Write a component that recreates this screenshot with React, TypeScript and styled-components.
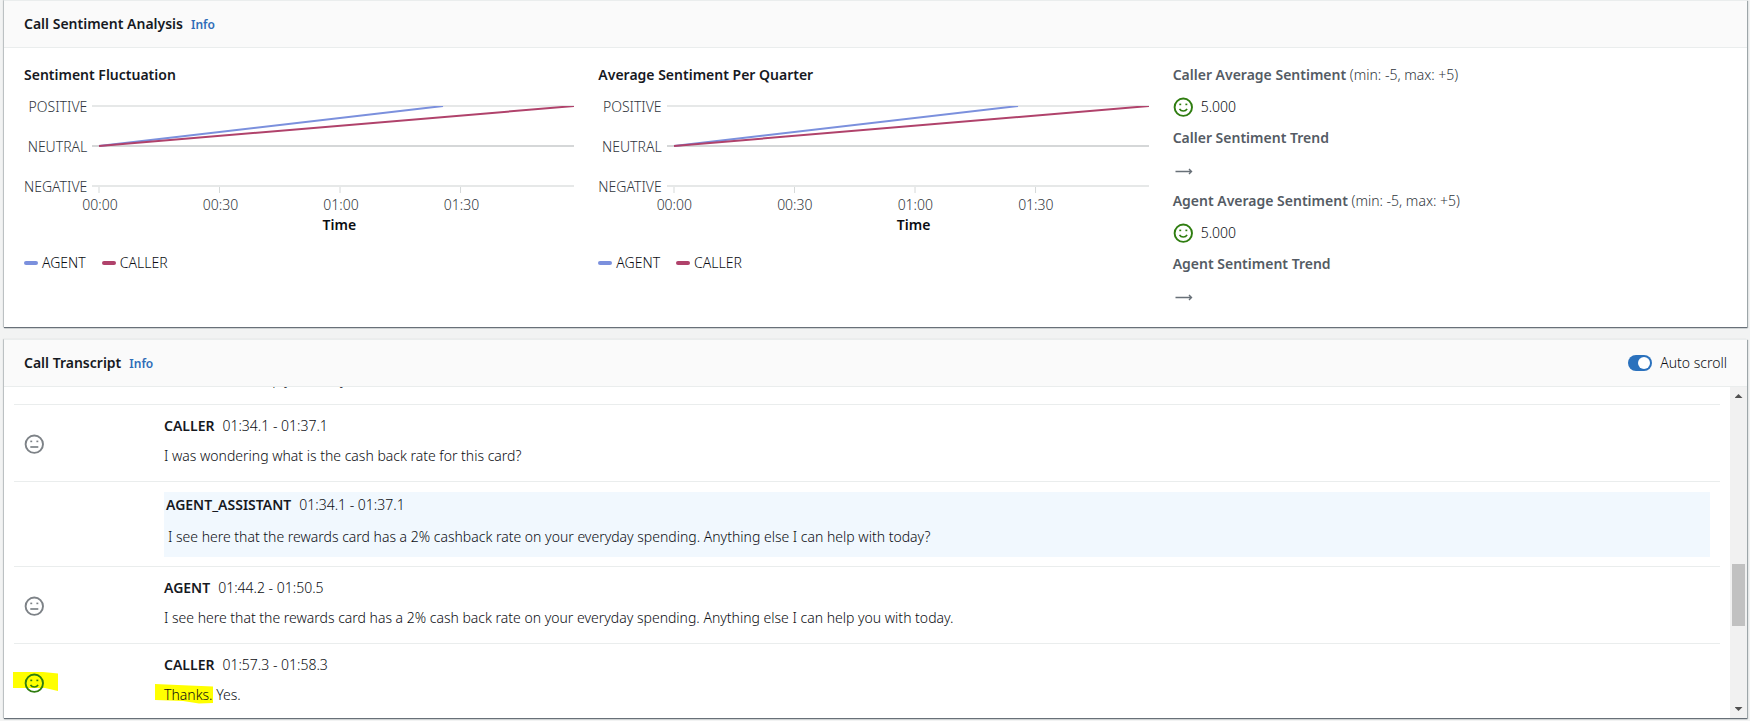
import React, { useId, useLayoutEffect, useRef, useState } from 'react';
import styled, { createGlobalStyle } from 'styled-components';

const GlobalStyle = createGlobalStyle`
  *, *::before, *::after { box-sizing: border-box; }
  body {
    margin: 0;
    background: #f2f3f3;
    color: #0b0d12;
    font: 300 14px/22px "Noto Sans", "Open Sans", sans-serif;
  }
  h2, h3, h4, p, ul, ol, dl, dd, figure { margin: 0; padding: 0; }
`;

const Page = styled.main`
  display: flex;
  flex-direction: column;
  gap: 12px;
  padding: 0 3px 3px 4px;
`;

const Panel = styled.section`
  background: #ffffff;
  border-top: 1px solid #eaeded;
  box-shadow: 0 1px 1px #687078, 1px 1px 1px rgba(0, 28, 36, 0.3), -1px 0 1px rgba(0, 28, 36, 0.15);
`;

const PanelHeader = styled.header`
  display: flex;
  align-items: center;
  justify-content: space-between;
  height: 47px;
  padding: 0 20px;
  background: #fafafa;
  border-bottom: 1px solid #eaeded;
`;

const TitleGroup = styled.div`
  display: flex;
  align-items: baseline;
  gap: 8px;
`;

const PanelTitle = styled.h2`
  color: #16191f;
  font-size: 14px;
  font-weight: 600;
  line-height: 22px;
`;

const InfoLink = styled.a`
  color: #2f6db8;
  font-size: 12px;
  font-weight: 600;
  text-decoration: none;
`;

const Columns = styled.div`
  display: grid;
  grid-template-columns: repeat(3, minmax(0, 1fr));
  gap: 20px;
  padding: 16px 20px 11px;
`;

const ChartTitle = styled.h3`
  color: #16191f;
  font-size: 14px;
  font-weight: 600;
  line-height: 22px;
`;

const Figure = styled.figure`
  padding-right: 4px;
`;

const PlotGrid = styled.div`
  display: grid;
  grid-template-columns: auto minmax(0, 1fr);
  column-gap: 5px;
  margin-top: 10px;
`;

const YLabels = styled.div`
  display: flex;
  flex-direction: column;
  gap: 18px;
  color: #30363d;
  text-align: right;
`;

const Plot = styled.svg`
  display: block;
  width: 100%;
  height: 92px;
  margin-top: 5px;
`;

const XLabels = styled.div`
  grid-column: 2;
  display: grid;
  grid-template-columns: repeat(3, 25%) auto;
  margin: -3px 10px 0 -10px;
  color: #30363d;
`;

const XLabel = styled.span`
  line-height: 20px;
`;

const AxisTitle = styled.div`
  grid-column: 2;
  padding-left: 12px;
  font-weight: 600;
  line-height: 20px;
  text-align: center;
`;

const Legend = styled.ul`
  display: flex;
  gap: 16px;
  margin-top: 17px;
  list-style: none;
`;

const LegendItem = styled.li`
  display: flex;
  align-items: center;
  gap: 4px;
`;

const Swatch = styled.span<{ $color: string }>`
  width: 14px;
  height: 4px;
  border-radius: 2px;
  background: ${(p) => p.$color};
`;

const Stats = styled.dl``;

const StatLabel = styled.dt`
  color: #545b64;
  font-weight: 600;
  line-height: 22px;
`;

const Range = styled.span`
  color: #30363d;
  font-weight: 300;
`;

const StatValue = styled.dd<{ $trend?: boolean }>`
  && {
    display: flex;
    align-items: center;
    gap: 8px;
    height: 22px;
    margin: ${(p) => (p.$trend ? '12px 0 7px' : '10px 0 9px')};
  }
`;

const FaceSvg = styled.svg`
  display: block;
  flex: none;
  width: 20px;
  height: 20px;
  fill: none;
  stroke-width: 2;
`;

const ArrowSvg = styled.svg`
  width: 20px;
  height: 20px;
  fill: none;
  stroke: #687078;
`;

const ToggleLabel = styled.label`
  display: flex;
  align-items: center;
  gap: 8px;
`;

const ToggleInput = styled.input`
  appearance: none;
  display: flex;
  align-items: center;
  width: 24px;
  height: 16px;
  margin: 0;
  padding: 2px;
  border-radius: 8px;
  background: #687078;

  &::before {
    content: '';
    width: 12px;
    height: 12px;
    border-radius: 50%;
    background: #ffffff;
  }
  &:checked {
    justify-content: flex-end;
    background: #2a71bd;
  }
`;

const TranscriptBody = styled.div`
  display: flex;
  height: 331px;
`;

const Viewport = styled.div`
  flex: 1;
  min-width: 0;
  padding: 0 10px;
  overflow-y: scroll;
  scrollbar-width: none;
`;

const Rows = styled.ol`
  position: relative;
  z-index: 0;
  list-style: none;
`;

const Row = styled.li`
  display: grid;
  grid-template-columns: 150px minmax(0, 1fr);
  align-items: center;
  padding: 10px 10px 9px 0;
  border-bottom: 1px solid #eaeded;

  &:first-child { padding-bottom: 8px; }
  &:last-child { border-bottom: 0; padding-bottom: 7px; }
`;

const FaceCell = styled.div`
  position: relative;
  justify-self: start;
  margin-left: 10px;
`;

const Message = styled.div<{ $assistant?: boolean }>`
  display: flex;
  flex-direction: column;
  gap: ${(p) => (p.$assistant ? '10px' : '8px')};
  padding: ${(p) => (p.$assistant ? '2px 2px 9px' : '0 0 5px')};
  background: ${(p) => (p.$assistant ? '#f1f8fe' : 'transparent')};
`;

const Meta = styled.div`
  display: flex;
  gap: 8px;
`;

const Speaker = styled.strong`
  color: #16191f;
  font-weight: 600;
`;

const Quote = styled.p<{ $assistant?: boolean }>`
  padding-left: ${(p) => (p.$assistant ? '2px' : '0')};
`;

const Marked = styled.span`
  position: relative;
`;

const Marker = styled.svg<{ $face?: boolean }>`
  position: absolute;
  z-index: -1;
  left: ${(p) => (p.$face ? '-11px' : '-9px')};
  top: -1px;
  width: ${(p) => (p.$face ? '45px' : '58px')};
  height: ${(p) => (p.$face ? '19px' : '20px')};
  fill: #ffff00;
`;

const ScrollTrack = styled.div`
  display: flex;
  flex-direction: column;
  align-items: center;
  width: 17px;
  background: #f1f1f1;
`;

const ScrollArrow = styled.span<{ $down?: boolean }>`
  width: 8px;
  height: 17px;
  background: #505050;
  clip-path: ${(p) =>
    p.$down ? 'polygon(0 6px, 8px 6px, 4px 10px)' : 'polygon(0 11px, 8px 11px, 4px 7px)'};
`;

const ScrollLane = styled.div`
  display: flex;
  flex-direction: column;
  flex: 1;
`;

const LaneSpace = styled.span<{ $grow: number }>`
  flex: ${(p) => p.$grow};
`;

const Thumb = styled.span`
  width: 13px;
  height: 62px;
  background: #c1c1c1;
`;

const AGENT = '#7b90dd';
const CALLER = '#b0426b';

function Face({ happy }: { happy?: boolean }) {
  const color = happy ? '#2f7d10' : '#7d8287';
  return (
    <FaceSvg viewBox="0 0 20 20" stroke={color} role="img" aria-label={happy ? 'Positive' : 'Neutral'}>
      <circle cx="10.3" cy="10.2" r="8.7" strokeWidth="1.9" />
      <rect x="6.3" y="6.6" width="1.9" height="1.6" fill={color} stroke="none" />
      <rect x="12.4" y="6.6" width="1.9" height="1.6" fill={color} stroke="none" />
      {happy ? (
        <path d="M6.500 11.800c.8 1.500 2.100 2.200 3.800 2.200s3-.7 3.800-2.200" strokeWidth="1.6" />
      ) : (
        <path d="M6.300 13h8" strokeWidth="1.7" />
      )}
    </FaceSvg>
  );
}

function Trend() {
  return (
    <ArrowSvg viewBox="0 0 20 20" role="img" aria-label="Flat">
      <path d="M2.500 9.500h16M16 7l2.500 2.500L16 12" strokeWidth="1.400" />
    </ArrowSvg>
  );
}

function Chart({ title }: { title: string }) {
  return (
    <Figure>
      <ChartTitle>{title}</ChartTitle>
      <PlotGrid>
        <YLabels>
          <span>POSITIVE</span>
          <span>NEUTRAL</span>
          <span>NEGATIVE</span>
        </YLabels>
        <Plot viewBox="0 0 482 92" preserveAspectRatio="none" aria-hidden="true">
          <path d="M0 5H482M0 85H482" stroke="#e6e8e8" strokeWidth="2" />
          <path d="M0 45H482" stroke="#d5d7d8" strokeWidth="2" />
          <path d="M7 86V92M127.500 86V92M248 86V92M368.500 86V92" stroke="#d5d9d9" strokeWidth="1" />
          <svg y="5" width="482" height="50" overflow="hidden">
            <path d="M7 40 351 0" stroke={AGENT} strokeWidth="2" />
            <path d="M7 40 482 0" stroke={CALLER} strokeWidth="2" />
          </svg>
        </Plot>
        <XLabels>
          {['00:00', '00:30', '01:00', '01:30'].map((t) => (
            <XLabel key={t}>{t}</XLabel>
          ))}
        </XLabels>
        <AxisTitle>Time</AxisTitle>
      </PlotGrid>
      <Legend>
        <LegendItem><Swatch $color={AGENT} />AGENT</LegendItem>
        <LegendItem><Swatch $color={CALLER} />CALLER</LegendItem>
      </Legend>
    </Figure>
  );
}

function PartyStats({ name }: { name: string }) {
  return (
    <>
      <StatLabel>{name} Average Sentiment <Range>(min: -5, max: +5)</Range></StatLabel>
      <StatValue><Face happy />5.000</StatValue>
      <StatLabel>{name} Sentiment Trend</StatLabel>
      <StatValue $trend><Trend /></StatValue>
    </>
  );
}

type Segment = {
  speaker: string;
  time: string;
  text: string;
  mood?: 'neutral' | 'happy';
  marked?: string;
};

const segments: Segment[] = [
  { speaker: 'AGENT', time: '01:30.2 - 01:32.4', text: 'Ok, how can I help you today?', mood: 'neutral' },
  { speaker: 'CALLER', time: '01:34.1 - 01:37.1', text: 'I was wondering what is the cash back rate for this card?', mood: 'neutral' },
  { speaker: 'AGENT_ASSISTANT', time: '01:34.1 - 01:37.1', text: 'I see here that the rewards card has a 2% cashback rate on your everyday spending. Anything else I can help with today?' },
  { speaker: 'AGENT', time: '01:44.2 - 01:50.5', text: 'I see here that the rewards card has a 2% cash back rate on your everyday spending. Anything else I can help you with today.', mood: 'neutral' },
  { speaker: 'CALLER', time: '01:57.3 - 01:58.3', marked: 'Thanks.', text: ' Yes.', mood: 'happy' },
];

function TranscriptRow({ segment }: { segment: Segment }) {
  const assistant = !segment.mood;
  return (
    <Row>
      <FaceCell>
        {segment.marked && (
          <Marker $face viewBox="0 0 45 19" aria-hidden="true">
            <path d="M0 0H30L45 1.500V19L32 16H0Z" />
          </Marker>
        )}
        {segment.mood && <Face happy={segment.mood === 'happy'} />}
      </FaceCell>
      <Message $assistant={assistant}>
        <Meta>
          <Speaker>{segment.speaker}</Speaker>
          <span>{segment.time}</span>
        </Meta>
        <Quote $assistant={assistant}>
          {segment.marked && (
            <Marked>
              <Marker viewBox="0 0 58 20" aria-hidden="true">
                <path d="M0 0 34 1.500 58 2.500V19L44 19.500 28 17 0 16Z" />
              </Marker>
              {segment.marked}
            </Marked>
          )}
          {segment.text}
        </Quote>
      </Message>
    </Row>
  );
}

export default function App() {
  const [autoScroll, setAutoScroll] = useState(true);
  const viewport = useRef<HTMLDivElement>(null);
  const toggleId = useId();

  useLayoutEffect(() => {
    const el = viewport.current;
    if (autoScroll && el) el.scrollTop = el.scrollHeight;
  }, [autoScroll]);

  return (
    <>
      <GlobalStyle />
      <Page>
        <Panel>
          <PanelHeader>
            <TitleGroup>
              <PanelTitle>Call Sentiment Analysis</PanelTitle>
              <InfoLink href="#sentiment-info">Info</InfoLink>
            </TitleGroup>
          </PanelHeader>
          <Columns>
            <Chart title="Sentiment Fluctuation" />
            <Chart title="Average Sentiment Per Quarter" />
            <Stats>
              <PartyStats name="Caller" />
              <PartyStats name="Agent" />
            </Stats>
          </Columns>
        </Panel>
        <Panel>
          <PanelHeader>
            <TitleGroup>
              <PanelTitle>Call Transcript</PanelTitle>
              <InfoLink href="#transcript-info">Info</InfoLink>
            </TitleGroup>
            <ToggleLabel htmlFor={toggleId}>
              <ToggleInput
                id={toggleId}
                type="checkbox"
                role="switch"
                checked={autoScroll}
                onChange={(e) => setAutoScroll(e.target.checked)}
              />
              Auto scroll
            </ToggleLabel>
          </PanelHeader>
          <TranscriptBody>
            <Viewport ref={viewport}>
              <Rows>
                {segments.map((s) => (
                  <TranscriptRow key={s.speaker + s.time} segment={s} />
                ))}
              </Rows>
            </Viewport>
            <ScrollTrack aria-hidden="true">
              <ScrollArrow />
              <ScrollLane>
                <LaneSpace $grow={160} />
                <Thumb />
                <LaneSpace $grow={75} />
              </ScrollLane>
              <ScrollArrow $down />
            </ScrollTrack>
          </TranscriptBody>
        </Panel>
      </Page>
    </>
  );
}
